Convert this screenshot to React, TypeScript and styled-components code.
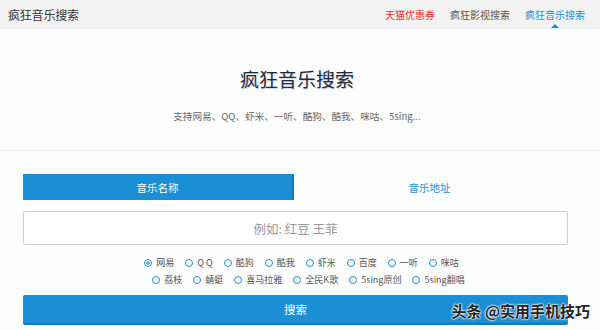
import React from "react";
import styled, { createGlobalStyle } from "styled-components";

const GlobalStyle = createGlobalStyle`
  html, body {
    margin: 0;
    padding: 0;
    background: #fdfdfd;
    font-family: "Microsoft YaHei", "Noto Sans CJK SC", "Liberation Sans", sans-serif;
  }
`;

const Page = styled.div`
  width: 600px;
  height: 330px;
  position: relative;
  overflow: hidden;
  background: #fdfdfd;
`;

const Header = styled.div`
  height: 28px;
  background: #f3f3f3;
  border-bottom: 1px solid #ececec;
  display: flex;
  align-items: center;
  justify-content: space-between;
  padding: 0 15px 0 8px;
`;

const Brand = styled.div`
  font-size: 12px;
  color: #333;
  letter-spacing: -0.2px;
`;

const Nav = styled.div`
  display: flex;
  gap: 15px;
  height: 100%;
`;

const NavItem = styled.a<{ $color: string; $active?: boolean }>`
  position: relative;
  display: flex;
  align-items: center;
  font-size: 10px;
  color: ${(p) => p.$color};
  text-decoration: none;
  &::after {
    content: "";
    display: ${(p) => (p.$active ? "block" : "none")};
    position: absolute;
    left: 50%;
    bottom: 0;
    margin-left: -4px;
    border-left: 4px solid transparent;
    border-right: 4px solid transparent;
    border-bottom: 4px solid #1b8fd6;
  }
`;

const Hero = styled.div`
  height: 122px;
  border-bottom: 1px solid #ececec;
  display: flex;
  flex-direction: column;
  align-items: center;
  padding-top: 36px;
  box-sizing: border-box;
`;

const Title = styled.h1`
  margin: 0 0 0 -6px;
  font-size: 19px;
  font-weight: normal;
  color: #1f2a3a;
  text-shadow: 1px 1px 1px #cfd8e3;
  line-height: 28px;
`;

const Subtitle = styled.p`
  margin: 16px 0 0 -6px;
  font-size: 9.6px;
  color: #666;
`;

const Body = styled.div`
  width: 545px;
  margin: 23px 0 0 23px;
  display: flex;
  flex-direction: column;
`;

const Tabs = styled.div`
  display: flex;
  height: 26px;
`;

const Tab = styled.div<{ $active?: boolean }>`
  flex: 0 0 271px;
  display: flex;
  align-items: center;
  justify-content: center;
  font-size: 10.5px;
  color: ${(p) => (p.$active ? "#fff" : "#1b8fd6")};
  background: ${(p) => (p.$active ? "#1b8fd6" : "transparent")};
  border-right: ${(p) => (p.$active ? "2px solid #0f7bbd" : "none")};
  box-sizing: border-box;
`;

const Input = styled.input`
  margin-top: 11px;
  height: 30px;
  border: 1px solid #cfcfcf;
  border-radius: 2px;
  background: #fff;
  text-align: center;
  font-size: 12.5px;
  font-family: inherit;
  outline: none;
  &::placeholder {
    color: #999;
  }
`;

const Options = styled.div`
  margin-top: 12px;
  display: flex;
  flex-direction: column;
  gap: 5px;
  align-items: center;
`;

const OptionRow = styled.div<{ $shift: number }>`
  display: flex;
  gap: 11px;
  margin-left: ${(p) => p.$shift}px;
`;

const Option = styled.label`
  display: flex;
  align-items: center;
  gap: 4px;
  font-size: 9px;
  color: #555;
  line-height: 12px;
`;

const Radio = styled.span<{ $checked?: boolean }>`
  width: 6px;
  height: 6px;
  border-radius: 50%;
  border: 1.5px solid #1b8fd6;
  background: ${(p) => (p.$checked ? "radial-gradient(circle, #8aa0b3 0 1.5px, #fff 2px)" : "#fff")};
`;

const SearchButton = styled.button`
  margin-top: 9px;
  height: 30px;
  border: none;
  border-bottom: 2px solid #0f7bbd;
  border-radius: 2px;
  background: #1b8fd6;
  color: #fff;
  font-size: 11.5px;
  font-family: inherit;
`;

const Watermark = styled.div`
  position: absolute;
  right: 10px;
  bottom: 9px;
  font-size: 15px;
  color: #222;
  font-weight: bold;
  text-shadow: 0 0 2px #fff, 0 0 2px #fff, 0 0 2px #fff;
`;

const row1 = ["网易", "Q Q", "酷狗", "酷我", "虾米", "百度", "一听", "咪咕"];
const row2 = ["荔枝", "蜻蜓", "喜马拉雅", "全民K歌", "5sing原创", "5sing翻唱"];

export default function App() {
  return (
    <Page>
      <GlobalStyle />
      <Header>
        <Brand>疯狂音乐搜索</Brand>
        <Nav>
          <NavItem $color="#f02d2d">天猫优惠券</NavItem>
          <NavItem $color="#555">疯狂影视搜索</NavItem>
          <NavItem $color="#1b8fd6" $active>
            疯狂音乐搜索
          </NavItem>
        </Nav>
      </Header>
      <Hero>
        <Title>疯狂音乐搜索</Title>
        <Subtitle>支持网易、QQ、虾米、一听、酷狗、酷我、咪咕、5sing...</Subtitle>
      </Hero>
      <Body>
        <Tabs>
          <Tab $active>音乐名称</Tab>
          <Tab>音乐地址</Tab>
        </Tabs>
        <Input placeholder="例如: 红豆 王菲" />
        <Options>
          <OptionRow $shift={12}>
            {row1.map((t, i) => (
              <Option key={t}>
                <Radio $checked={i === 0} />
                {t}
              </Option>
            ))}
          </OptionRow>
          <OptionRow $shift={26}>
            {row2.map((t) => (
              <Option key={t}>
                <Radio />
                {t}
              </Option>
            ))}
          </OptionRow>
        </Options>
        <SearchButton>搜索</SearchButton>
      </Body>
      <Watermark>头条 @实用手机技巧</Watermark>
    </Page>
  );
}
